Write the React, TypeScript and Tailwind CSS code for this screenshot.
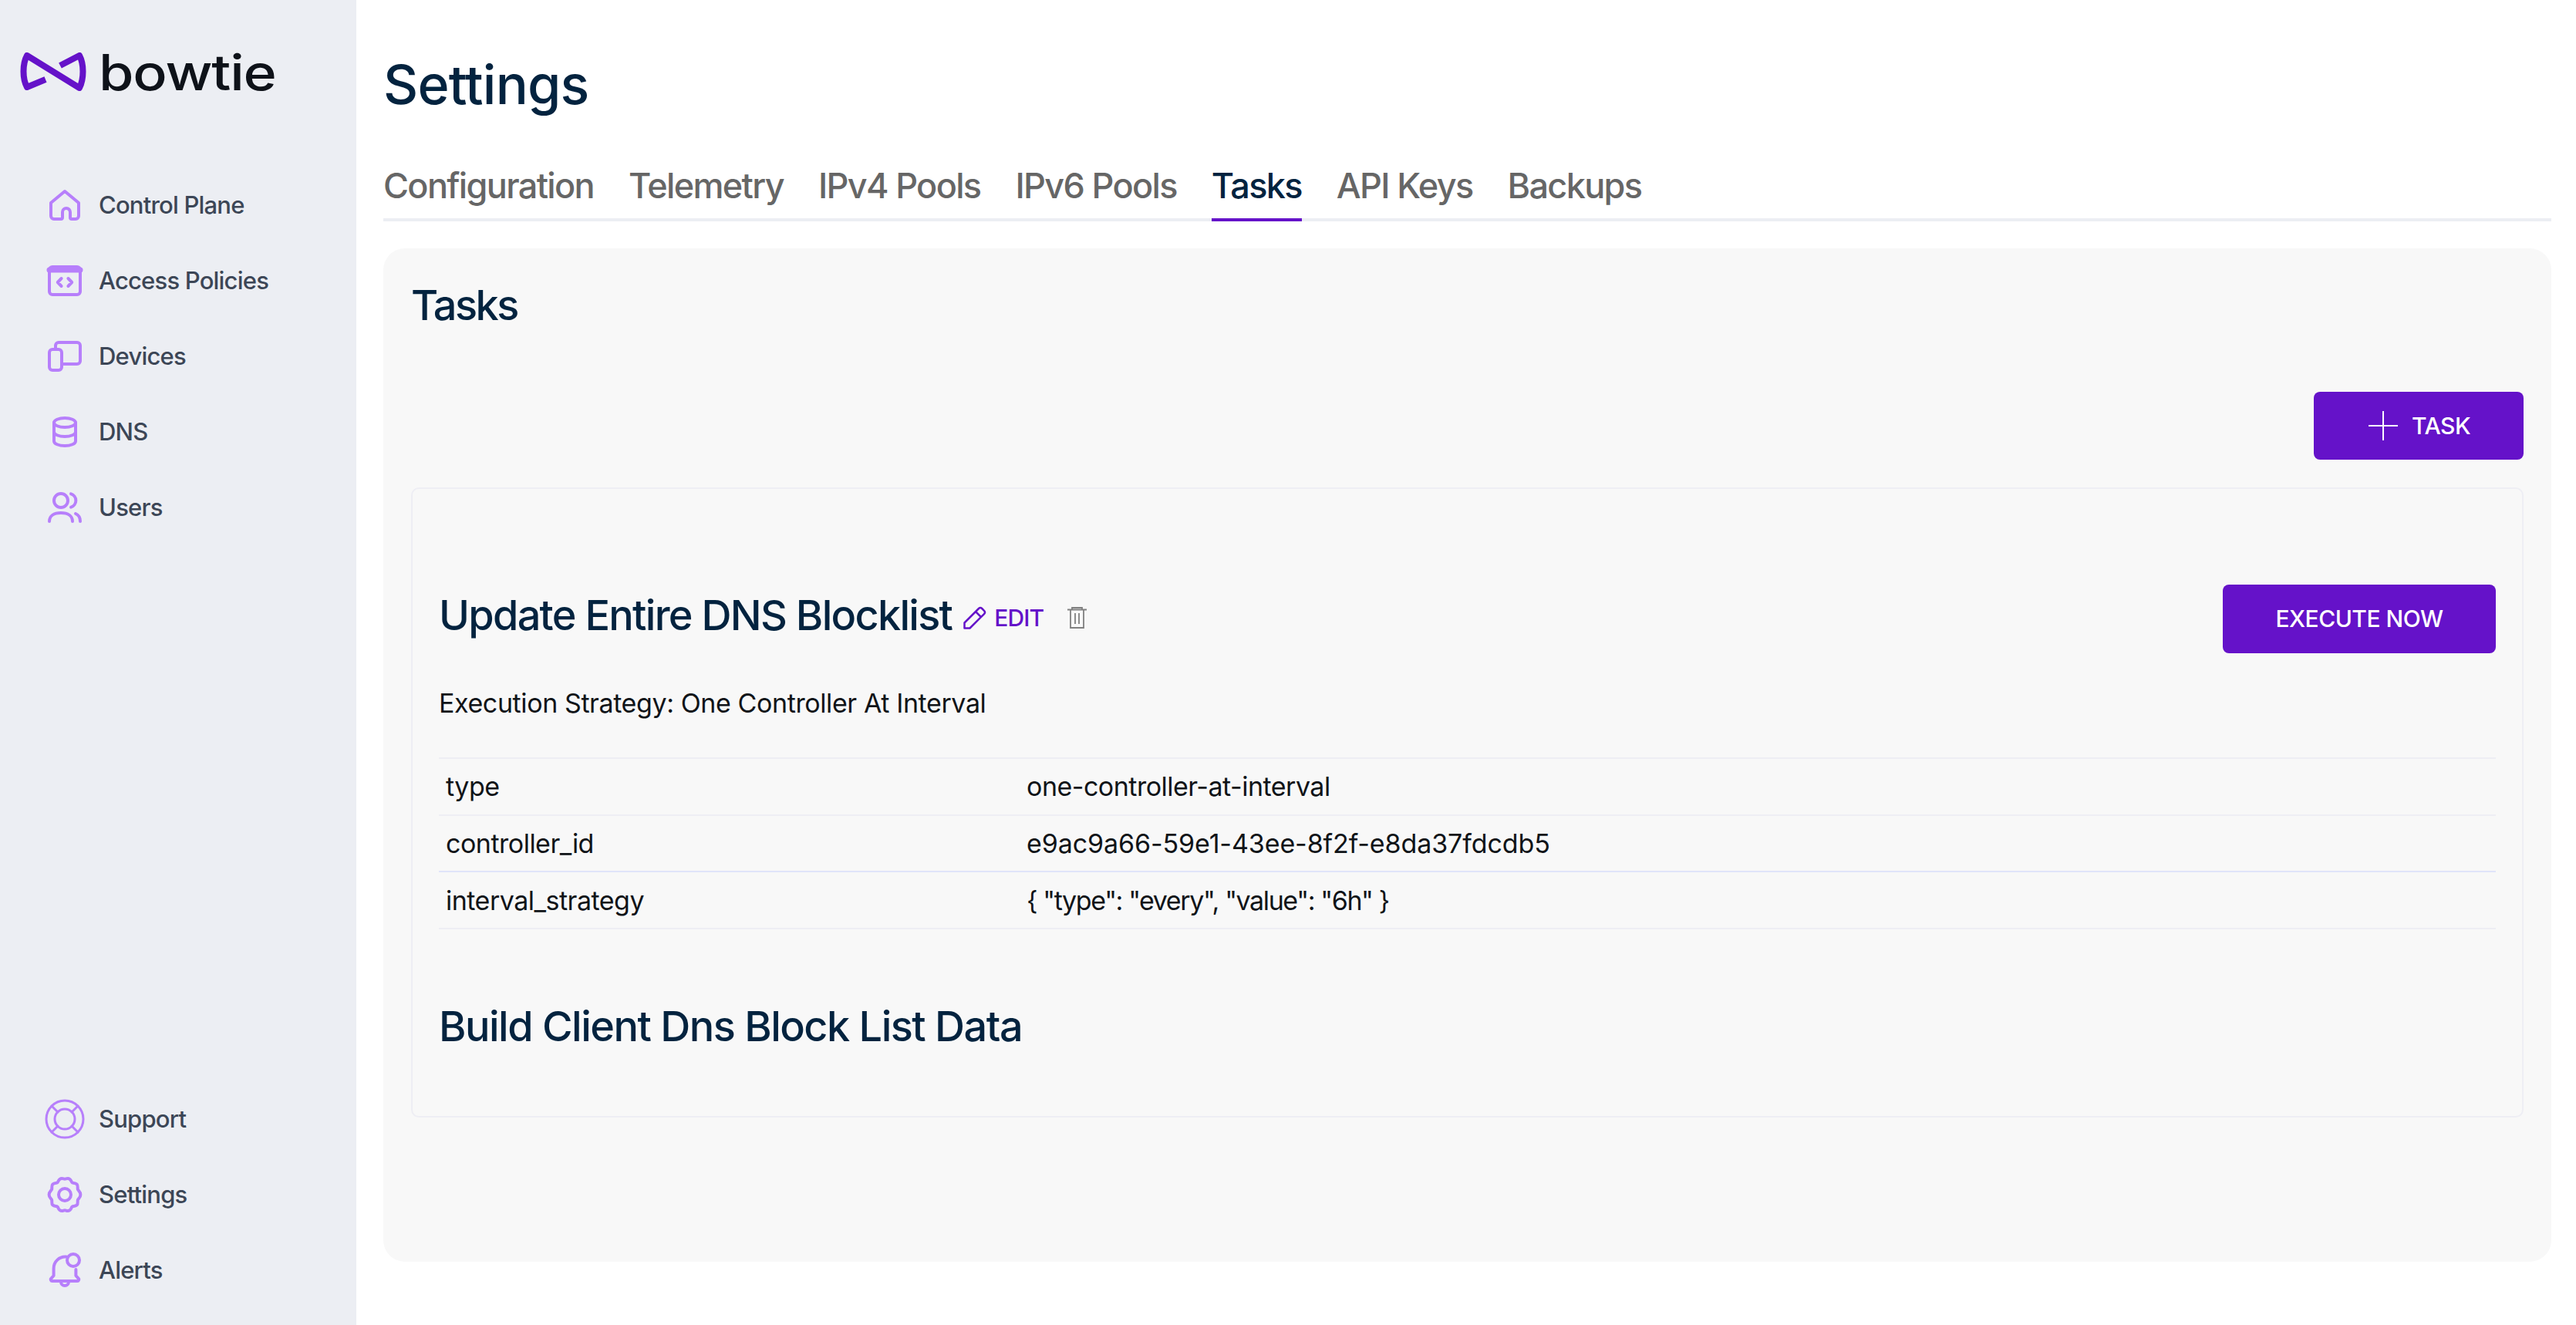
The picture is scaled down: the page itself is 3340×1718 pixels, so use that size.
import type { ReactNode } from "react";

const stroke = {
  fill: "none",
  stroke: "currentColor",
  strokeWidth: 2,
  strokeLinecap: "round" as const,
  strokeLinejoin: "round" as const,
};

function Icon({ children }: { children: ReactNode }) {
  return (
    <svg viewBox="0 0 24 24" className="h-[48px] w-[48px] shrink-0 overflow-visible text-[#b77ffb]" {...stroke}>
      {children}
    </svg>
  );
}

function Logo() {
  return (
    <svg viewBox="0 0 86 50" className="h-[50px] w-[86px] shrink-0" fill="none" stroke="#6512c9" strokeWidth="8" strokeLinejoin="round">
      <path d="M33 35 L9 45 C3 34 3 15 9 4 L77 46 C83 34 83 15 77 4 L52 17" />
    </svg>
  );
}

const topItems: { label: string; icon: ReactNode }[] = [
  {
    label: "Control Plane",
    icon: (
      <Icon>
        <path d="M3 10.500 12 3l9 7.500V19a2 2 0 0 1-2 2h-2.500a1 1 0 0 1-1-1v-3.500a2.500 2.500 0 0 0-5 0V20a1 1 0 0 1-1 1H5a2 2 0 0 1-2-2z" />
      </Icon>
    ),
  },
  {
    label: "Access Policies",
    icon: (
      <Icon>
        <rect x="2" y="3" width="20" height="18" rx="2" />
        <path d="M2 5h20" strokeWidth="3.500" />
        <path d="m9.800 10.500-2.400 2.500 2.400 2.500M14.200 10.500l2.400 2.500-2.400 2.500" />
      </Icon>
    ),
  },
  {
    label: "Devices",
    icon: (
      <Icon>
        <path d="M6 7V5a2 2 0 0 1 2-2h12a2 2 0 0 1 2 2v10a2 2 0 0 1-2 2H10.500" />
        <rect x="2" y="7.500" width="8" height="13.500" rx="2" />
      </Icon>
    ),
  },
  {
    label: "DNS",
    icon: (
      <Icon>
        <ellipse cx="12" cy="6" rx="7" ry="3" />
        <path d="M5 6v12c0 1.700 3.100 3 7 3s7-1.300 7-3V6M5 12c0 1.700 3.100 3 7 3s7-1.300 7-3" />
      </Icon>
    ),
  },
  {
    label: "Users",
    icon: (
      <Icon>
        <circle cx="9.500" cy="7.500" r="4.500" />
        <path d="M16 3.200a4.500 4.500 0 0 1 0 8.600M2 21c0-3.500 3-5.500 7.500-5.500S17 17.500 17 21M19 16c1.800.8 3 2.600 3 5" />
      </Icon>
    ),
  },
];

const bottomItems: { label: string; icon: ReactNode }[] = [
  {
    label: "Support",
    icon: (
      <Icon>
        <g strokeWidth="1.500">
          <circle cx="12" cy="12" r="12" />
          <circle cx="12" cy="12" r="6.500" />
          <path d="m3.500 3.500 4 4M20.500 3.500l-4 4M3.500 20.500l4-4M20.500 20.500l-4-4" />
        </g>
      </Icon>
    ),
  },
  {
    label: "Settings",
    icon: (
      <Icon>
        <circle cx="12" cy="12" r="4" />
        <path d="M8.800 1.900c1.400-1 2.400 0 3.200 0s1.800-1 3.200 0c1.100.8.900 1.800 1.600 2.300s1.900 0 3 1c1.100 1.200.2 2.500.7 3.500.4.800 1.700 1.300 1.700 3.300s-1.300 2.500-1.700 3.300c-.5 1 .4 2.300-.7 3.500-1.100 1-2.300.5-3 1s-.5 1.500-1.600 2.300c-1.400 1-2.400 0-3.200 0s-1.800 1-3.200 0c-1.100-.8-.9-1.800-1.600-2.300s-1.900 0-3-1c-1.100-1.200-.2-2.500-.7-3.500-.4-.8-1.700-1.300-1.700-3.300s1.300-2.500 1.700-3.300c.5-1-.4-2.300.7-3.500 1.100-1 2.300-.5 3-1s.5-1.500 1.600-2.300z" />
      </Icon>
    ),
  },
  {
    label: "Alerts",
    icon: (
      <Icon>
        <path d="M13 3.300A7.500 7.500 0 0 0 4.800 11v4.500l-1.500 1.700A1 1 0 0 0 4 19h16a1 1 0 0 0 .7-1.800l-1.500-1.700V11.500" />
        <path d="M9.500 19.500a2.500 2.500 0 0 0 5 0" />
        <circle cx="17.500" cy="5.500" r="4" />
      </Icon>
    ),
  },
];

const tabs = ["Configuration", "Telemetry", "IPv4 Pools", "IPv6 Pools", "Tasks", "API Keys", "Backups"];

const rows = [
  { k: "type", v: "one-controller-at-interval", border: "border-[#eeeef4]", track: "tracking-[-0.5px]" },
  { k: "controller_id", v: "e9ac9a66-59e1-43ee-8f2f-e8da37fdcdb5", border: "border-[#e0e4fa]", track: "tracking-[-0.1px]" },
  { k: "interval_strategy", v: '{ "type": "every", "value": "6h" }', border: "border-[#eeeef4]", track: "tracking-[-1.4px]" },
];

function NavItem({ label, icon }: { label: string; icon: ReactNode }) {
  return (
    <div className="flex h-[98px] items-center gap-[20px] pl-[60px] text-[31px] font-medium tracking-[-0.8px] text-[#3c4656]">
      {icon}
      <span>{label}</span>
    </div>
  );
}

export default function App() {
  return (
    <div className="flex h-[1718px] w-[3340px] overflow-hidden bg-white font-['Inter',sans-serif]">
      <aside className="flex w-[462px] shrink-0 flex-col justify-between bg-[#eceef3] pb-[22px]">
        <div>
          <div className="flex h-[217px] items-start gap-[16px] pl-[26px] pt-[68px]">
            <Logo />
            <span className="origin-left -translate-y-[10px] scale-x-[1.15] text-[64px] leading-[72px] font-medium tracking-[-1px] text-[#0e1219]">bowtie</span>
          </div>
          {topItems.map((item) => (
            <NavItem key={item.label} {...item} />
          ))}
        </div>
        <div>
          {bottomItems.map((item) => (
            <NavItem key={item.label} {...item} />
          ))}
        </div>
      </aside>

      <main className="min-w-0 flex-1 pl-[35px] pr-[32px]">
        <h1 className="pt-[62px] text-[70px] leading-[96px] font-medium tracking-[-0.8px] text-[#03233f]">Settings</h1>
        <div className="mt-[38px] flex h-[91px] gap-[45px] border-b-4 border-[#eceef3]">
          {tabs.map((tab) =>
            tab === "Tasks" ? (
              <div key={tab} className="-mb-1 flex h-[91px] items-center border-b-4 border-[#6512c9] pt-[2px] text-[45px] font-medium tracking-[-1.650px] text-[#03233f]">
                {tab}
              </div>
            ) : (
              <div key={tab} className="flex h-[87px] items-center pt-[2px] text-[45px] font-medium tracking-[-1.650px] text-[#666666]">
                {tab}
              </div>
            ),
          )}
        </div>

        <section className="mt-[35px] h-[1314px] rounded-[28px] bg-[#f8f8f8] px-[36px] pt-[42px]">
          <h2 className="text-[54px] leading-[64px] font-medium tracking-[-2.500px] text-[#03233f]">Tasks</h2>
          <div className="mt-[80px] flex justify-end">
            <button className="flex h-[88px] w-[272px] items-center justify-center gap-[18px] rounded-[8px] bg-[#6512c9] pl-[2px] text-[30px] font-medium tracking-[-0.5px] text-white">
              <svg viewBox="0 0 38 38" className="h-[38px] w-[38px]" stroke="currentColor" strokeWidth="2">
                <path d="M19 0v38M0 19h38" />
              </svg>
              TASK
            </button>
          </div>
          <div className="mt-[36px] h-[817px] rounded-[10px] border-2 border-[#eeeef4] px-[34px] pt-[123px]">
            <div className="flex h-[90px] items-center justify-between">
              <div className="-mt-[8px] flex items-center">
                <h3 className="text-[54px] leading-[64px] font-medium tracking-[-1.700px] text-[#03233f]">Update Entire DNS Blocklist</h3>
                <div className="mt-[6px] ml-[15px] flex items-center gap-[10px] text-[30px] font-medium tracking-[-0.9px] text-[#6512c9]">
                  <svg viewBox="0 0 30 30" className="h-[30px] w-[30px]" fill="none" stroke="currentColor" strokeWidth="2.500" strokeLinejoin="round">
                    <path d="M1.500 28.500v-7L20 3a3 3 0 0 1 4.200 0l2.800 2.800a3 3 0 0 1 0 4.200L8.500 28.500zM16 7l7 7" />
                  </svg>
                  EDIT
                </div>
                <svg viewBox="0 0 25 28" className="mt-[6px] ml-[31px] h-[28px] w-[25px]" fill="none" stroke="#808080" strokeWidth="1.800">
                  <path d="M0 3.500h25M6 3.500V1h13v2.500M4 3.500V27h17V3.500M10 8v14M15 8v14" />
                </svg>
              </div>
              <button className="h-[89px] w-[354px] rounded-[8px] bg-[#6512c9] text-[30px] font-medium whitespace-nowrap tracking-[-0.5px] text-white">EXECUTE NOW</button>
            </div>
            <p className="mt-[45px] text-[34px] leading-[40px] tracking-[-0.4px] text-[#101418]">Execution Strategy: One Controller At Interval</p>
            <div className="mt-[50px] border-t-2 border-[#eeeef4]">
              {rows.map((row) => (
                <div key={row.k} className={`flex h-[73.670px] items-center border-b-2 pl-[9px] text-[34px] tracking-[-0.5px] text-[#101418] ${row.border}`}>
                  <span className="w-[753px]">{row.k}</span>
                  <span className={row.track}>{row.v}</span>
                </div>
              ))}
            </div>
            <h3 className="mt-[94px] text-[54px] leading-[64px] font-medium tracking-[-1.500px] text-[#03233f]">Build Client Dns Block List Data</h3>
          </div>
        </section>
      </main>
    </div>
  );
}
